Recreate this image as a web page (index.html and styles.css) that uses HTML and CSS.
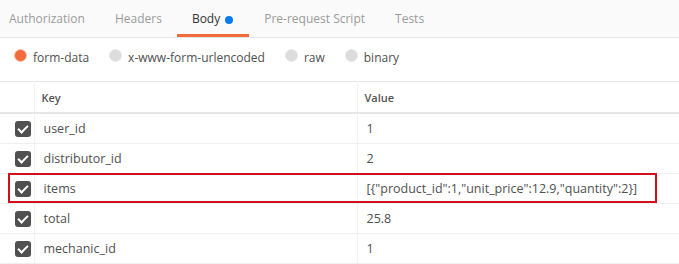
FILE: index.html
```html
<!DOCTYPE html>
<html lang="en">
<head>
    <meta charset="UTF-8">
    <title>Request Body</title>
    <link rel="stylesheet" href="styles.css">
</head>
<body>
    <ul class="tabs">
        <li class="tab">Authorization</li>
        <li class="tab">Headers</li>
        <li class="tab active">Body <span class="dot"></span></li>
        <li class="tab">Pre-request Script</li>
        <li class="tab">Tests</li>
    </ul>

    <div class="modes">
        <label class="mode"><span class="radio checked"></span>form-data</label>
        <label class="mode"><span class="radio"></span>x-www-form-urlencoded</label>
        <label class="mode"><span class="radio"></span>raw</label>
        <label class="mode"><span class="radio"></span>binary</label>
    </div>

    <div class="params">
        <table class="kv">
            <thead>
                <tr>
                    <th class="check-col"></th>
                    <th class="key-col">Key</th>
                    <th>Value</th>
                </tr>
            </thead>
            <tbody>
                <tr>
                    <td class="check-col"><span class="box"></span></td>
                    <td class="key">user_id</td>
                    <td class="val">1</td>
                </tr>
                <tr>
                    <td class="check-col"><span class="box"></span></td>
                    <td class="key">distributor_id</td>
                    <td class="val">2</td>
                </tr>
                <tr>
                    <td class="check-col"><span class="box"></span></td>
                    <td class="key">items</td>
                    <td class="val">[{"product_id":1,"unit_price":12.9,"quantity":2}]</td>
                </tr>
                <tr>
                    <td class="check-col"><span class="box"></span></td>
                    <td class="key">total</td>
                    <td class="val">25.8</td>
                </tr>
                <tr>
                    <td class="check-col"><span class="box"></span></td>
                    <td class="key">mechanic_id</td>
                    <td class="val">1</td>
                </tr>
            </tbody>
        </table>
        <!-- annotation box around the items row -->
        <div class="mark"></div>
    </div>
</body>
</html>
```

FILE: styles.css
```css
body {
    font-family: "Open Sans", sans-serif;
    font-size: 12px;
    color: #505050;
    margin: 0;
    background: #fff;
}

.tabs {
    display: flex;
    list-style: none;
    margin: 0;
    padding: 0;
    height: 37px;
    background: #fafafa;
    border-bottom: 1px solid #e6e6e6;
}

.tab {
    padding: 0 15px;
    line-height: 38px;
    color: #9a9a9a;
    box-sizing: border-box;
    height: 37px;
}

.tab:first-child {
    padding-left: 9px;
}

.tab.active {
    color: #333;
    padding: 0 16px 0 15px;
    border-bottom: 3px solid #f26b3a;
    display: flex;
    align-items: flex-start;
}

.dot {
    display: inline-block;
    width: 8px;
    height: 8px;
    border-radius: 50%;
    background: #097bed;
    margin: 16px 0 0 5px;
}

.modes {
    display: flex;
    align-items: center;
    height: 43px;
    padding-left: 14px;
    padding-bottom: 5px;
    box-sizing: border-box;
}

.mode {
    display: flex;
    align-items: center;
    margin-right: 20px;
    color: #505050;
}

.radio {
    width: 11px;
    height: 11px;
    border-radius: 50%;
    background: #dcdcdc;
    border: 1px solid #e8e8e8;
    margin-right: 6px;
    margin-top: -3px;
}

.radio.checked {
    background: #f26b3a;
    border-color: #f8c5ae;
}

.params {
    position: relative;
}

.kv {
    width: 100%;
    border-collapse: collapse;
    border-top: 1px solid #e6e6e6;
}

.kv th {
    text-align: left;
    font-size: 11px;
    font-weight: 600;
    color: #555;
    height: 30px;
    padding: 0 0 0 7px;
    border-bottom: 2px solid #e6e6e6;
    border-left: 1px solid #f3f3f3;
}

.kv td {
    height: 29px;
    padding: 0 0 0 9px;
    font-size: 12.5px;
    border-bottom: 1px solid #f0f0f0;
    border-left: 1px solid #f3f3f3;
}

.kv .check-col {
    width: 34px;
    padding: 0;
    border-left: none;
    box-sizing: border-box;
}

.kv .key-col {
    width: 323px;
    box-sizing: border-box;
}

.box {
    display: block;
    width: 16px;
    height: 16px;
    margin-left: 15px;
    border-radius: 3px;
    background: #505050;
    position: relative;
}

.box::after {
    content: "";
    position: absolute;
    left: 5px;
    top: 2px;
    width: 4px;
    height: 8px;
    border: solid #fff;
    border-width: 0 2px 2px 0;
    transform: rotate(45deg);
}

.mark {
    position: absolute;
    left: 8px;
    top: 92px;
    width: 649px;
    height: 30px;
    border: 2px solid #d0101b;
    box-sizing: border-box;
}
```
